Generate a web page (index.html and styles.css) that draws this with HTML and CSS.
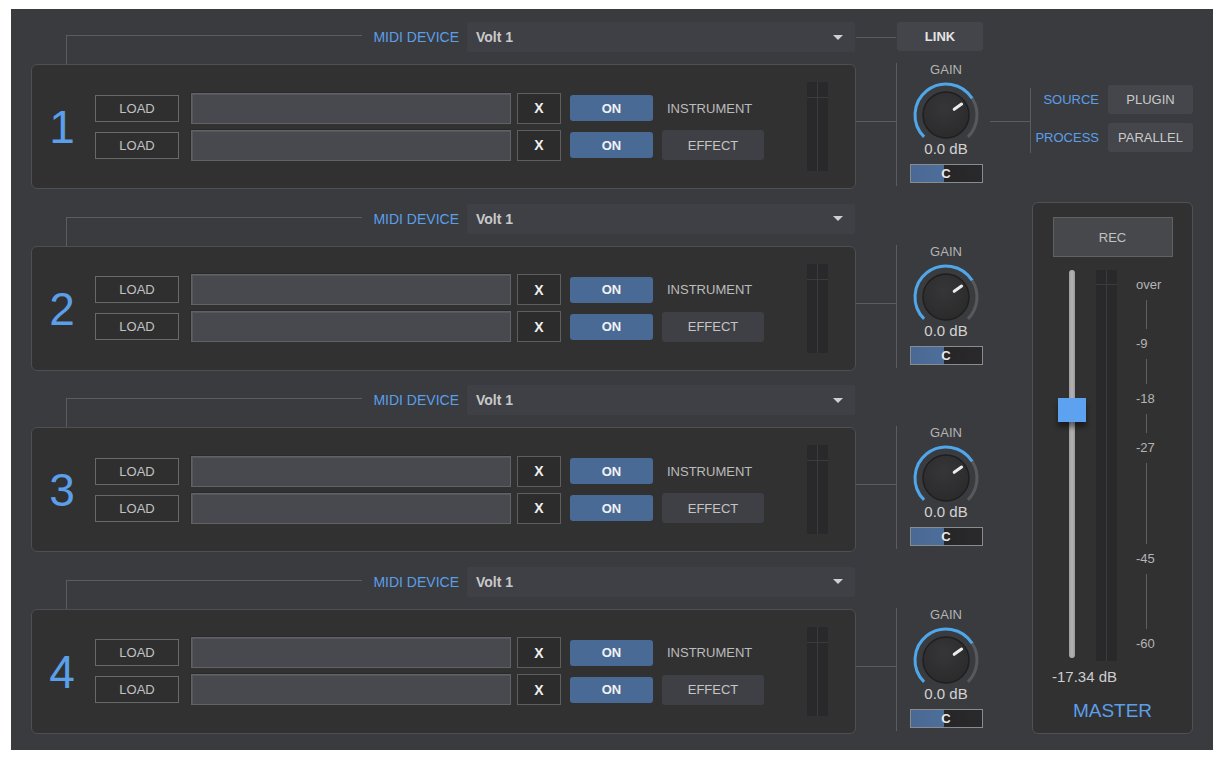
FILE: index.html
```html
<!DOCTYPE html>
<html>
<head>
<meta charset="utf-8">
<title>Mixer</title>
<link rel="stylesheet" href="styles.css">
</head>
<body>
<div class="app">
  <div class="channels">

    <section class="channel">
      <div class="head">
        <div class="bracket"></div>
        <span class="midi-label">MIDI DEVICE</span>
        <div class="dropdown"><span>Volt 1</span><i class="caret"></i></div>
      </div>
      <div class="link-line"></div>
      <div class="link-cell"><button class="link">LINK</button></div>
      <div class="panel">
        <div class="num">1</div>
        <div class="rows">
          <div class="row"><button class="load">LOAD</button><div class="slot"></div><button class="x">X</button><button class="on">ON</button><span class="kind">INSTRUMENT</span></div>
          <div class="row"><button class="load">LOAD</button><div class="slot"></div><button class="x">X</button><button class="on">ON</button><button class="effect">EFFECT</button></div>
        </div>
        <div class="meter"><div class="mcol"><i></i><i></i></div><div class="mcol"><i></i><i></i></div></div>
      </div>
      <div class="conn"></div>
      <div class="gain">
        <div class="gain-label">GAIN</div>
        <svg class="knob" width="70" height="60" viewBox="0 0 70 60">
          <defs><radialGradient id="kg1" cx="45%" cy="35%" r="70%"><stop offset="0" stop-color="#363638"/><stop offset="1" stop-color="#2a2a2b"/></radialGradient></defs>
          <path d="M13.08 56.92 A31 31 0 1 1 61.29 18.57" fill="none" stroke="#4fa7ea" stroke-width="3"/>
          <path d="M61.29 18.57 A31 31 0 0 1 56.92 56.92" fill="none" stroke="#58595c" stroke-width="3"/>
          <circle cx="35" cy="35" r="23" fill="url(#kg1)" stroke="#1f1f20" stroke-width="1.5"/>
          <line x1="43.2" y1="29.3" x2="50.6" y2="24.1" stroke="#ececec" stroke-width="3" stroke-linecap="round"/>
        </svg>
        <div class="db">0.0 dB</div>
        <div class="pan">C</div>
      </div>
    </section>

    <section class="channel">
      <div class="head">
        <div class="bracket"></div>
        <span class="midi-label">MIDI DEVICE</span>
        <div class="dropdown"><span>Volt 1</span><i class="caret"></i></div>
      </div>
      <div class="panel">
        <div class="num">2</div>
        <div class="rows">
          <div class="row"><button class="load">LOAD</button><div class="slot"></div><button class="x">X</button><button class="on">ON</button><span class="kind">INSTRUMENT</span></div>
          <div class="row"><button class="load">LOAD</button><div class="slot"></div><button class="x">X</button><button class="on">ON</button><button class="effect">EFFECT</button></div>
        </div>
        <div class="meter"><div class="mcol"><i></i><i></i></div><div class="mcol"><i></i><i></i></div></div>
      </div>
      <div class="conn"></div>
      <div class="gain">
        <div class="gain-label">GAIN</div>
        <svg class="knob" width="70" height="60" viewBox="0 0 70 60">
          <defs><radialGradient id="kg2" cx="45%" cy="35%" r="70%"><stop offset="0" stop-color="#363638"/><stop offset="1" stop-color="#2a2a2b"/></radialGradient></defs>
          <path d="M13.08 56.92 A31 31 0 1 1 61.29 18.57" fill="none" stroke="#4fa7ea" stroke-width="3"/>
          <path d="M61.29 18.57 A31 31 0 0 1 56.92 56.92" fill="none" stroke="#58595c" stroke-width="3"/>
          <circle cx="35" cy="35" r="23" fill="url(#kg2)" stroke="#1f1f20" stroke-width="1.5"/>
          <line x1="43.2" y1="29.3" x2="50.6" y2="24.1" stroke="#ececec" stroke-width="3" stroke-linecap="round"/>
        </svg>
        <div class="db">0.0 dB</div>
        <div class="pan">C</div>
      </div>
    </section>

    <section class="channel">
      <div class="head">
        <div class="bracket"></div>
        <span class="midi-label">MIDI DEVICE</span>
        <div class="dropdown"><span>Volt 1</span><i class="caret"></i></div>
      </div>
      <div class="panel">
        <div class="num">3</div>
        <div class="rows">
          <div class="row"><button class="load">LOAD</button><div class="slot"></div><button class="x">X</button><button class="on">ON</button><span class="kind">INSTRUMENT</span></div>
          <div class="row"><button class="load">LOAD</button><div class="slot"></div><button class="x">X</button><button class="on">ON</button><button class="effect">EFFECT</button></div>
        </div>
        <div class="meter"><div class="mcol"><i></i><i></i></div><div class="mcol"><i></i><i></i></div></div>
      </div>
      <div class="conn"></div>
      <div class="gain">
        <div class="gain-label">GAIN</div>
        <svg class="knob" width="70" height="60" viewBox="0 0 70 60">
          <defs><radialGradient id="kg3" cx="45%" cy="35%" r="70%"><stop offset="0" stop-color="#363638"/><stop offset="1" stop-color="#2a2a2b"/></radialGradient></defs>
          <path d="M13.08 56.92 A31 31 0 1 1 61.29 18.57" fill="none" stroke="#4fa7ea" stroke-width="3"/>
          <path d="M61.29 18.57 A31 31 0 0 1 56.92 56.92" fill="none" stroke="#58595c" stroke-width="3"/>
          <circle cx="35" cy="35" r="23" fill="url(#kg3)" stroke="#1f1f20" stroke-width="1.5"/>
          <line x1="43.2" y1="29.3" x2="50.6" y2="24.1" stroke="#ececec" stroke-width="3" stroke-linecap="round"/>
        </svg>
        <div class="db">0.0 dB</div>
        <div class="pan">C</div>
      </div>
    </section>

    <section class="channel">
      <div class="head">
        <div class="bracket"></div>
        <span class="midi-label">MIDI DEVICE</span>
        <div class="dropdown"><span>Volt 1</span><i class="caret"></i></div>
      </div>
      <div class="panel">
        <div class="num">4</div>
        <div class="rows">
          <div class="row"><button class="load">LOAD</button><div class="slot"></div><button class="x">X</button><button class="on">ON</button><span class="kind">INSTRUMENT</span></div>
          <div class="row"><button class="load">LOAD</button><div class="slot"></div><button class="x">X</button><button class="on">ON</button><button class="effect">EFFECT</button></div>
        </div>
        <div class="meter"><div class="mcol"><i></i><i></i></div><div class="mcol"><i></i><i></i></div></div>
      </div>
      <div class="conn"></div>
      <div class="gain">
        <div class="gain-label">GAIN</div>
        <svg class="knob" width="70" height="60" viewBox="0 0 70 60">
          <defs><radialGradient id="kg4" cx="45%" cy="35%" r="70%"><stop offset="0" stop-color="#363638"/><stop offset="1" stop-color="#2a2a2b"/></radialGradient></defs>
          <path d="M13.08 56.92 A31 31 0 1 1 61.29 18.57" fill="none" stroke="#4fa7ea" stroke-width="3"/>
          <path d="M61.29 18.57 A31 31 0 0 1 56.92 56.92" fill="none" stroke="#58595c" stroke-width="3"/>
          <circle cx="35" cy="35" r="23" fill="url(#kg4)" stroke="#1f1f20" stroke-width="1.5"/>
          <line x1="43.2" y1="29.3" x2="50.6" y2="24.1" stroke="#ececec" stroke-width="3" stroke-linecap="round"/>
        </svg>
        <div class="db">0.0 dB</div>
        <div class="pan">C</div>
      </div>
    </section>

  </div>

  <aside class="side">
    <div class="source">
      <div class="src-line"></div>
      <div class="src-bracket"></div>
      <div class="src-grid">
        <span class="src-label">SOURCE</span><button class="src-btn">PLUGIN</button>
        <span class="src-label">PROCESS</span><button class="src-btn">PARALLEL</button>
      </div>
    </div>

    <div class="master">
      <button class="rec">REC</button>
      <div class="master-body">
        <div class="fader"><div class="track"></div><div class="thumb"></div></div>
        <div class="meter big"><div class="mcol"><i></i><i></i></div><div class="mcol"><i></i><i></i></div></div>
        <div class="scale">
          <span class="tick">over</span><i style="height:29px"></i>
          <span class="tick">-9</span><i style="height:25px"></i>
          <span class="tick">-18</span><i style="height:19px"></i>
          <span class="tick">-27</span><i style="height:81px"></i>
          <span class="tick">-45</span><i style="height:55px"></i>
          <span class="tick">-60</span>
        </div>
      </div>
      <div class="level">-17.34 dB</div>
      <div class="master-title">MASTER</div>
    </div>
  </aside>
</div>
</body>
</html>
```
FILE: styles.css
```css
* { box-sizing: border-box; }
html, body { margin: 0; background: #ffffff; }
body { font-family: "Liberation Sans", Arial, Helvetica, sans-serif; }
button { font-family: inherit; padding: 0; margin: 0; cursor: default; }

.app {
  margin: 9px 0 0 11px;
  width: 1202px;
  height: 741px;
  background: #3a3b3f;
  padding: 13px 20px 0 20px;
  display: flex;
}

.channels { display: flex; flex-direction: column; gap: 14.5px; width: 959px; }

.channel {
  display: grid;
  grid-template-columns: 825px 40px 94px;
  grid-template-rows: 42px 125px;
  grid-template-areas: "head lline lcell" "panel conn gain";
}

.head { grid-area: head; display: flex; align-items: flex-start; padding-left: 35px; }
.bracket {
  flex: 1;
  align-self: stretch;
  margin-top: 13px;
  border-top: 1px solid #5b5c60;
  border-left: 1px solid #5b5c60;
}
.midi-label { line-height: 30px; font-size: 14px; color: #5c9fe9; margin: 0 8px 0 11px; }
.dropdown {
  width: 388px; height: 30px; margin-right: 1px;
  background: #3f4045; border-radius: 2px;
  display: flex; align-items: center; justify-content: space-between;
  padding: 0 12px 0 9px;
}
.dropdown span { font-weight: bold; font-size: 14px; color: #c9c9c9; }
.caret { width: 0; height: 0; border-left: 5px solid transparent; border-right: 5px solid transparent; border-top: 5px solid #cfcfcf; }

.link-line { grid-area: lline; margin-top: 15px; border-top: 1px solid #5b5c60; height: 0; }
.link-cell { grid-area: lcell; }
.link {
  margin-left: 1px; width: 86px; height: 29px;
  background: #44454a; border: none; border-radius: 3px;
  color: #e4e4e4; font-weight: bold; font-size: 13px;
}

.panel {
  grid-area: panel;
  border: 1px solid #4e4f53;
  border-radius: 6px;
  background: #313132;
  display: flex; align-items: center;
}
.num { width: 60px; text-align: center; font-size: 46px; line-height: 46px; color: #5c9fe9; margin-top: 1px; }
.rows { margin-left: 3px; display: flex; flex-direction: column; gap: 6px; }
.row { display: flex; align-items: center; height: 31px; }

.load {
  width: 84px; height: 27px;
  background: #2f2f30; border: 1px solid #68696b;
  color: #c2c2c2; font-size: 13px;
}
.slot {
  width: 320px; height: 31px; margin-left: 12px;
  background: #47494e; border: 1px solid #606266;
  box-shadow: -1px -1px 0 #2a2a2b, inset 1px 1px 0 #55575b;
}
.x {
  width: 44px; height: 31px; margin-left: 6px;
  background: #2c2c2d; border: 1px solid #5e5e60;
  color: #f0f0f0; font-weight: bold; font-size: 14px;
}
.on {
  width: 83px; height: 26px; margin-left: 9px;
  background: #4a6a96; border: none; border-radius: 3px;
  color: #f2f2f2; font-weight: bold; font-size: 13px;
}
.kind { margin-left: 14px; color: #bcbcbc; font-size: 13px; }
.effect {
  width: 102px; height: 30px; margin-left: 9px;
  background: #3f4045; border: none; border-radius: 3px;
  color: #c4c4c4; font-size: 13px;
}

.meter {
  margin-left: auto; margin-right: 27px;
  width: 21px; height: 89px;
  display: flex; gap: 1px; background: #3b3b3d;
}
.mcol { flex: 1; display: flex; flex-direction: column; gap: 1px; }
.mcol i { display: block; background: #29292b; }
.mcol i:first-child { height: 15px; }
.mcol i:last-child { flex: 1; }

.conn { grid-area: conn; margin-top: 57px; height: 0; border-top: 1px solid #5b5c60; }

.gain {
  grid-area: gain;
  align-self: start;
  margin-top: -1px;
  height: 123px;
  border-left: 1px solid #5b5c60;
  padding-left: 5px;
  display: flex; flex-direction: column; align-items: center;
}
.gain-label { font-size: 13px; line-height: 14px; color: #b4b4b4; }
.knob { display: block; margin-top: 3px; }
.db { margin-top: 1px; font-size: 15px; line-height: 16px; color: #d2d2d2; }
.pan {
  margin-top: 7px; width: 73px; height: 19px;
  border: 1px solid #8a8b8d;
  background: linear-gradient(to right, #4a6894 0, #4e6e9a 47%, #262628 47%, #29292b 100%);
  color: #e8e8e8; font-weight: bold; font-size: 13px; line-height: 17px; text-align: center;
}

.side { width: 203px; display: flex; flex-direction: column; }
.source { margin-top: 63px; display: flex; align-items: flex-start; height: 67px; }
.src-line { width: 40px; margin-top: 36px; border-top: 1px solid #5b5c60; }
.src-bracket { margin-top: 3px; height: 65px; border-left: 1px solid #5b5c60; }
.src-grid {
  flex: 1;
  display: grid; grid-template-columns: 1fr 85px;
  column-gap: 9px; row-gap: 9px; align-items: center;
}
.src-label { text-align: right; color: #5c9fe9; font-size: 13px; }
.src-btn {
  height: 29px; background: #44464b; border: none; border-radius: 3px;
  color: #cacaca; font-size: 13px;
}

.master {
  margin: 50px 0 0 42px;
  width: 161px; height: 532px;
  border: 1px solid #505155; border-radius: 6px;
  background: #313132;
  display: flex; flex-direction: column; align-items: stretch;
}
.rec {
  align-self: center;
  margin-top: 14px; width: 120px; height: 40px;
  background: #46484c; border: 1px solid #5f6165;
  color: #c2c2c2; font-size: 13px;
}
.master-body { margin-top: 13px; height: 391px; display: flex; }
.fader { position: relative; margin-left: 25px; width: 28px; height: 391px; }
.track {
  margin: 0 auto; width: 6px; height: 388px; border-radius: 3px;
  background: linear-gradient(to right, #9c9c9c, #b4b4b4 50%, #9a9a9a);
}
.thumb {
  position: absolute; left: 0; top: 128px;
  width: 28px; height: 24px;
  background: #5da1f1;
  box-shadow: 0 5px 5px rgba(0, 0, 0, 0.45);
}
.meter.big { margin-left: 10px; margin-right: 0; height: 391px; }
.meter.big .mcol i:first-child { height: 14px; }
.scale { margin-left: 19px; display: flex; flex-direction: column; align-items: flex-start; }
.tick { font-size: 13px; line-height: 14px; padding: 8px 0; color: #b4b4b4; }
.scale i { display: block; margin-left: 10px; border-left: 1px solid #5e5f62; }
.level { margin-top: 8px; padding-left: 19px; font-size: 15px; line-height: 16px; color: #cdcdcd; }
.master-title { margin-top: 15px; text-align: center; font-size: 19px; line-height: 22px; color: #5c9fe9; }
```
